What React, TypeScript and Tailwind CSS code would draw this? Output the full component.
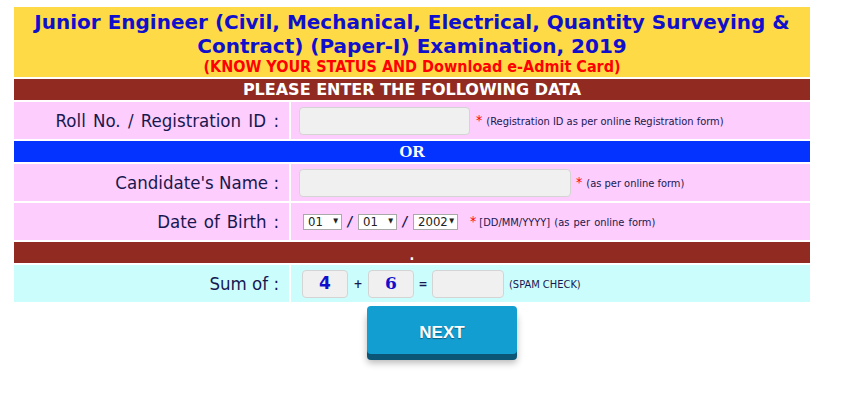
import React from "react";

const tahoma = { fontFamily: '"DejaVu Sans Condensed", "DejaVu Sans", sans-serif' };

function Sel({ v, w }: { v: string; w: string }) {
  return (
    <div
      className={`flex items-center justify-between h-[16px] ${w} bg-white border border-[#a9a9a9] pl-[4px] pr-[3px] text-[13px] leading-none text-[#222]`}
    >
      <span>{v}</span>
      <span className="text-[7px] leading-none">▼</span>
    </div>
  );
}

export default function App() {
  return (
    <div className="w-[846px] h-[401px] bg-white overflow-hidden" style={tahoma}>
      <div className="ml-[14px] mt-[7px] w-[796px] flex flex-col gap-[2px]">
        {/* Header */}
        <div className="h-[70px] bg-[#fedb46] flex flex-col items-center pt-[3px] overflow-hidden">
          <div
            className="text-[20px] leading-[24px] font-bold text-[#1010cc] text-center"
            style={{ fontFamily: '"DejaVu Sans", Verdana, sans-serif' }}
          >
            Junior Engineer (Civil, Mechanical, Electrical, Quantity Surveying &amp;
            <br />
            Contract) (Paper-I) Examination, 2019
          </div>
          <div className="text-[16px] leading-[18px] font-bold text-[#f00]">
            (KNOW YOUR STATUS AND Download e-Admit Card)
          </div>
        </div>
        <div
          className="h-[21px] bg-[#912b22] flex items-center justify-center text-white font-bold text-[16px]"
          style={{ fontFamily: '"DejaVu Sans", sans-serif' }}
        >
          PLEASE ENTER THE FOLLOWING DATA
        </div>
        <div className="grid grid-cols-[275px_519px] gap-[2px]">
          <div className="h-[37px] bg-[#fdcdfd] flex items-center justify-end pr-[10px] text-[18.5px] text-[#181850] [word-spacing:2px]">
            Roll No. / Registration ID :
          </div>
          <div className="h-[37px] bg-[#fdcdfd] flex items-center pl-[8px]">
            <div className="w-[171px] h-[28px] rounded-[4px] bg-[#f0f0f0] border border-[#d4d4d4]" />
            <span className="text-[#f00] text-[14px] ml-[6px] mr-[4px]">*</span>
            <span className="text-[11px] text-[#181850] mt-[4px]">(Registration ID as per online Registration form)</span>
          </div>
        </div>
        <div
          className="h-[21px] bg-[#0433ff] flex items-center justify-center text-white font-bold text-[17px]"
          style={{ fontFamily: '"Liberation Serif", serif' }}
        >
          OR
        </div>
        <div className="grid grid-cols-[275px_519px] gap-[2px]">
          <div className="h-[37px] bg-[#fdcdfd] flex items-center justify-end pr-[10px] text-[18.5px] text-[#181850]">
            Candidate&apos;s Name :
          </div>
          <div className="h-[37px] bg-[#fdcdfd] flex items-center pl-[8px]">
            <div className="w-[272px] h-[28px] rounded-[4px] bg-[#f0f0f0] border border-[#d4d4d4]" />
            <span className="text-[#f00] text-[14px] ml-[5px] mr-[4px]">*</span>
            <span className="text-[11px] text-[#181850] mt-[4px]">(as per online form)</span>
          </div>
          <div className="h-[37px] bg-[#fdcdfd] flex items-center justify-end pr-[10px] text-[18.5px] text-[#181850] [word-spacing:1.5px]">
            Date of Birth :
          </div>
          <div className="h-[37px] bg-[#fdcdfd] flex items-center pl-[12px]">
            <Sel v="01" w="w-[39px]" />
            <span className="w-[16px] text-center text-[14px] font-bold text-[#181850] italic">/</span>
            <Sel v="01" w="w-[39px]" />
            <span className="w-[16px] text-center text-[14px] font-bold text-[#181850] italic">/</span>
            <Sel v="2002" w="w-[45px]" />
            <span className="text-[#f00] text-[14px] ml-[12px] mr-[3px]">*</span>
            <span className="text-[11px] text-[#181850] mt-[3px] [word-spacing:1px]">[DD/MM/YYYY] (as per online form)</span>
          </div>
        </div>
        <div className="h-[21px] bg-[#912b22] flex items-end justify-center text-white font-bold text-[14px] leading-[16px]">
          .
        </div>
        <div className="grid grid-cols-[275px_519px] gap-[2px]">
          <div className="h-[37px] bg-[#ccfdfd] flex items-center justify-end pr-[10px] text-[18.5px] text-[#181850]">
            Sum of :
          </div>
          <div className="h-[37px] bg-[#ccfdfd] flex items-center pl-[11px]">
            <div
              className="w-[46px] h-[28px] rounded-[4px] bg-[#f0f0f0] border border-[#d4d4d4] flex items-center justify-center text-[17px] font-bold text-[#1010cc]"
              style={{ fontFamily: '"DejaVu Sans", sans-serif' }}
            >
              4
            </div>
            <span className="w-[20px] text-center text-[12px] font-bold text-[#181850]">+</span>
            <div
              className="w-[46px] h-[28px] rounded-[4px] bg-[#f0f0f0] border border-[#d4d4d4] flex items-center justify-center text-[17px] font-bold text-[#1010cc]"
              style={{ fontFamily: '"DejaVu Serif", serif' }}
            >
              6
            </div>
            <span className="w-[18px] text-center text-[12px] font-bold text-[#181850]">=</span>
            <div className="w-[72px] h-[28px] rounded-[4px] bg-[#f0f0f0] border border-[#d4d4d4]" />
            <span className="ml-[5px] text-[11px] text-[#181850] mt-[3px]">(SPAM CHECK)</span>
          </div>
        </div>
      </div>
      <div className="ml-[367px] mt-[4px]">
        <div
          className="w-[150px] h-[48px] rounded-[4px] bg-[#139ed2] flex items-center justify-center pt-[6px] text-white font-bold text-[17px] shadow-[0_6px_0_#0b5677,0_9px_7px_rgba(0,0,0,0.28)]"
          style={{ fontFamily: '"Liberation Sans", Arial, sans-serif', textShadow: "0 1px 1px rgba(0,0,0,0.4)" }}
        >
          NEXT
        </div>
      </div>
    </div>
  );
}
